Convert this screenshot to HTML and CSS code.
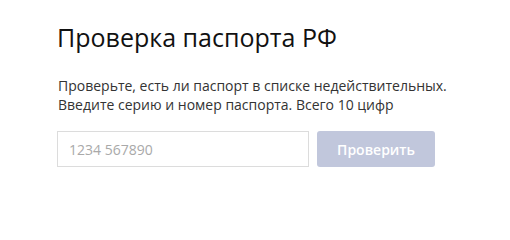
FILE: index.html
```html
<!DOCTYPE html>
<html lang="ru">
<head>
<meta charset="utf-8">
<link rel="stylesheet" href="styles.css">
</head>
<body>
<main class="check">
  <h1 class="check__title">Проверка паспорта РФ</h1>
  <p class="check__text">Проверьте, есть ли паспорт в списке недействительных.<br>Введите серию и номер паспорта. Всего 10 цифр</p>
  <form class="check__form">
    <input class="check__input" type="text" placeholder="1234 567890">
    <button class="check__button" type="button">Проверить</button>
  </form>
</main>
</body>
</html>
```

FILE: styles.css
```css
html, body {
  margin: 0;
  padding: 0;
  background: #fff;
}
.check {
  padding: 22px 0 0 57px;
  font-family: "Open Sans", sans-serif;
}
.check__title {
  margin: 0;
  font-size: 25px;
  line-height: 30px;
  font-weight: 400;
  color: #111;
}
.check__text {
  margin: 24px 0 0 1px;
  font-size: 14px;
  line-height: 19px;
  color: #333;
}
.check__form {
  display: flex;
  gap: 8px;
  margin-top: 17px;
}
.check__input {
  box-sizing: border-box;
  width: 252px;
  height: 36px;
  margin: 0;
  padding: 0 11px;
  border: 1px solid #dcdcdc;
  border-radius: 0;
  font-family: inherit;
  font-size: 14px;
  color: #333;
  outline: none;
}
.check__input::placeholder {
  color: #a9a9a9;
}
.check__button {
  box-sizing: border-box;
  width: 118px;
  height: 36px;
  margin: 0;
  border: none;
  border-radius: 3px;
  background: #c1c7dc;
  color: #fff;
  font-family: inherit;
  font-size: 14px;
  font-weight: 600;
}
```
